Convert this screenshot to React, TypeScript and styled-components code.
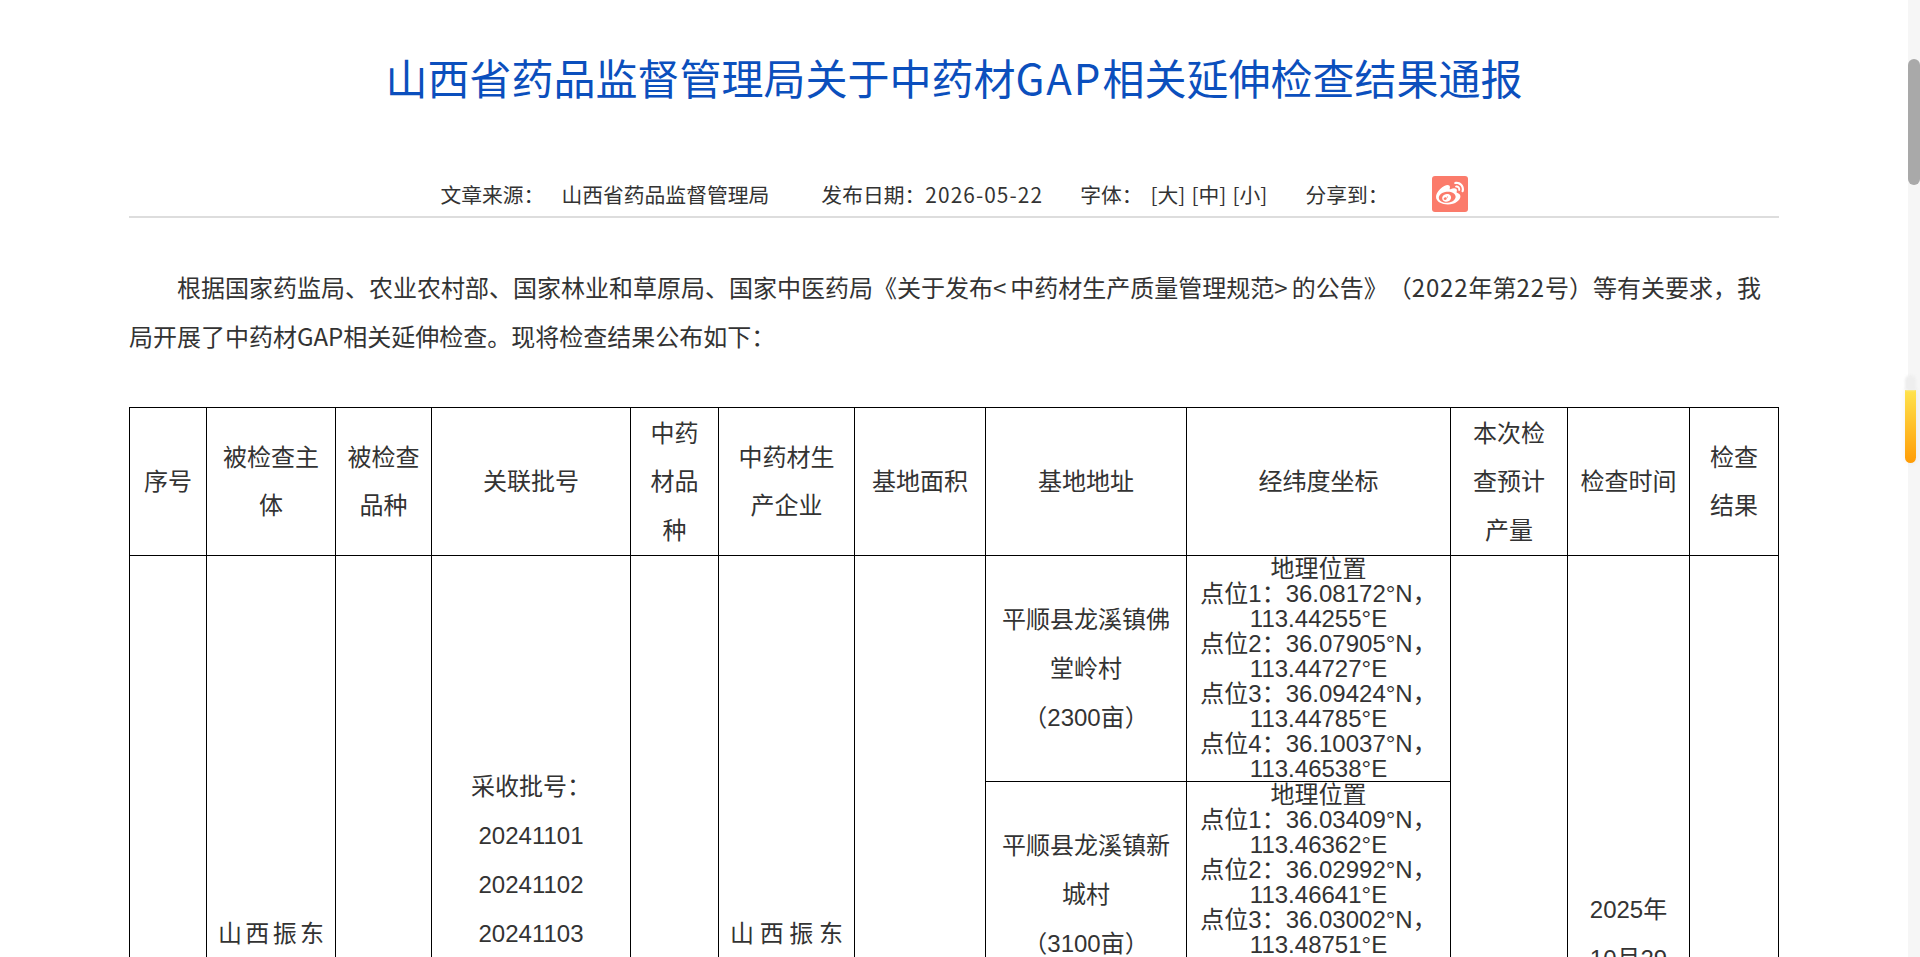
import * as React from 'react'
import styled, { createGlobalStyle } from 'styled-components'
import { FaWeibo } from 'react-icons/fa'

const GlobalStyle = createGlobalStyle`
  html, body {
    margin: 0;
    padding: 0;
    height: 100%;
    overflow: hidden;
    background: #fff;
  }
`

const Page = styled.div`
  position: relative;
  display: flex;
  width: 1920px;
  height: 957px;
  overflow: hidden;
  font-family: "Noto Sans CJK SC", "Liberation Sans", sans-serif;
  color: #333;
`

const Main = styled.main`
  flex: 1;
  min-width: 0;
  height: 957px;
  overflow: hidden;
`

const Article = styled.article`
  width: 1650px;
  margin: 0 auto;
`

const Title = styled.h1`
  margin: 0;
  padding-top: 47px;
  height: 129px;
  font-size: 42px;
  font-weight: 400;
  line-height: 60px;
  text-align: center;
  color: #0b4fbd;
`

const TitleLatin = styled.span`
  letter-spacing: 2px;
`

const Meta = styled.div`
  display: flex;
  justify-content: center;
  align-items: center;
  height: 36px;
  padding-bottom: 4px;
  border-bottom: 2px solid #ddd;
  font-size: 20.8px;
  line-height: 36px;
  white-space: nowrap;
`

const MetaItem = styled.span<{ $gap?: number }>`
  margin-left: ${(p) => p.$gap ?? 0}px;
`

const MetaDate = styled.span`
  letter-spacing: 1.1px;
`

const SizeLinks = styled(MetaItem)`
  word-spacing: 1.5px;
`

const ShareIcon = styled.a`
  display: flex;
  align-items: center;
  justify-content: center;
  width: 36px;
  height: 36px;
  margin-left: 43px;
  border-radius: 3px;
  background: #fb7b6b;
  color: #fff;
`

const Intro = styled.p`
  margin: 44px 0 47px;
  font-size: 24px;
  line-height: 49px;
  text-indent: 48px;
  text-spacing-trim: space-all;
`

const Spaced = styled.span<{ $space: number }>`
  letter-spacing: ${(p) => p.$space}px;
`

const Table = styled.table`
  width: 1649px;
  table-layout: fixed;
  border-collapse: collapse;
  font-family: "Liberation Sans", "Noto Sans CJK SC", sans-serif;
  font-size: 24px;
  line-height: 49px;
`

const HeadCell = styled.th`
  padding: 0 11px 2px;
  border: 1px solid #000;
  font-weight: 400;
  line-height: 48.3px;
  text-align: center;
  vertical-align: middle;
  font-family: "Noto Sans CJK SC", "Liberation Sans", sans-serif;
`

const Cell = styled.td<{ $justify?: boolean }>`
  padding: 0 11px;
  border: 1px solid #000;
  text-align: ${(p) => (p.$justify ? 'justify' : 'center')};
  vertical-align: middle;
`

const CoordCell = styled.td`
  padding: 0 11px;
  border: 1px solid #000;
  line-height: 25px;
  text-align: center;
  vertical-align: top;
`

const DataRow = styled.tr`
  height: 226px;
`

const HeaderRow = styled.tr`
  height: 147px;
`

const ScrollTrack = styled.div`
  flex: none;
  width: 12px;
  height: 957px;
  background: #f6f6f6;
`

const ScrollThumb = styled.div`
  width: 12px;
  height: 126px;
  margin-top: 59px;
  border-radius: 6px;
  background: #a9a9a9;
`

const SideTab = styled.div`
  position: absolute;
  top: 390px;
  right: 4px;
  width: 11px;
  height: 73px;
  border-radius: 0 0 6px 6px;
  background: linear-gradient(#ffe34d, #ff9c05);
  box-shadow: 0 0 6px rgba(0, 0, 0, 0.06);

  &::before {
    content: '';
    position: absolute;
    top: -15px;
    left: 0;
    width: 11px;
    height: 15px;
    border-radius: 6px 6px 0 0;
    background: #eee;
    filter: blur(1px);
  }
`

const columns = [77, 129, 96, 199, 88, 136, 131, 201, 264, 117, 122, 89]

const headers = [
  '序号',
  '被检查主体',
  '被检查品种',
  '关联批号',
  '中药材品种',
  '中药材生产企业',
  '基地面积',
  '基地地址',
  '经纬度坐标',
  '本次检查预计产量',
  '检查时间',
  '检查结果',
]

const batches = [
  '20241101',
  '20241102',
  '20241103',
  '20241104',
  '20241105',
  '20241106',
  '20241107',
  '20241108',
  '20241109',
]

const company = '山西振东道地药材开发有限公司'

const sites = [
  {
    address: ['平顺县龙溪镇佛堂岭村', '（2300亩）'],
    points: [
      ['36.08172', '113.44255'],
      ['36.07905', '113.44727'],
      ['36.09424', '113.44785'],
      ['36.10037', '113.46538'],
    ],
  },
  {
    address: ['平顺县龙溪镇新城村', '（3100亩）'],
    points: [
      ['36.03409', '113.46362'],
      ['36.02992', '113.46641'],
      ['36.03002', '113.48751'],
    ],
  },
]

const Coordinates = ({ points }: { points: string[][] }) => (
  <CoordCell>
    <div>地理位置</div>
    {points.map(([lat, lng], i) => (
      <div key={lat}>
        点位{i + 1}：{lat}°N，{lng}°E
      </div>
    ))}
  </CoordCell>
)

export default function App() {
  return (
    <Page>
      <GlobalStyle />
      <Main>
        <Article>
          <Title>
            山西省药品监督管理局关于中药材<TitleLatin>GAP</TitleLatin>相关延伸检查结果通报
          </Title>
          <Meta>
            <MetaItem>文章来源：</MetaItem>
            <MetaItem $gap={17}>山西省药品监督管理局</MetaItem>
            <MetaItem $gap={52}>
              发布日期：<MetaDate>2026-05-22</MetaDate>
            </MetaItem>
            <MetaItem $gap={37}>字体：</MetaItem>
            <SizeLinks $gap={8}>[大] [中] [小]</SizeLinks>
            <MetaItem $gap={38}>分享到：</MetaItem>
            <ShareIcon>
              <FaWeibo size={28} />
            </ShareIcon>
          </Meta>
          <Intro>
            根据国家药监局、农业农村部、国家林业和草原局、国家中医药局《关于发布
            <Spaced $space={4}>&lt;</Spaced>中药材生产质量管理规范<Spaced $space={4}>&gt;</Spaced>
            的公告》（<Spaced $space={0.9}>2022</Spaced>年第<Spaced $space={0.9}>22</Spaced>
            号）等有关要求，我
            <br />
            局开展了中药材GAP相关延伸检查。现将检查结果公布如下：
          </Intro>
          <Table>
            <colgroup>
              {columns.map((w, i) => (
                <col key={i} width={w} />
              ))}
            </colgroup>
            <thead>
              <HeaderRow>
                {headers.map((h) => (
                  <HeadCell key={h}>{h}</HeadCell>
                ))}
              </HeaderRow>
            </thead>
            <tbody>
              <DataRow>
                <Cell rowSpan={4}>1</Cell>
                <Cell rowSpan={4} $justify>
                  {company}
                </Cell>
                <Cell rowSpan={4} />
                <Cell rowSpan={4}>
                  采收批号：
                  {batches.map((b) => (
                    <div key={b}>{b}</div>
                  ))}
                </Cell>
                <Cell rowSpan={4} />
                <Cell rowSpan={4} $justify>
                  {company}
                </Cell>
                <Cell rowSpan={4} />
                <Cell>
                  {sites[0].address.map((line) => (
                    <div key={line}>{line}</div>
                  ))}
                </Cell>
                <Coordinates points={sites[0].points} />
                <Cell rowSpan={4} />
                <Cell rowSpan={4}>
                  <div>2025年</div>
                  <div>10月29</div>
                  <div>日-10</div>
                  <div>月31</div>
                  <div>日</div>
                </Cell>
                <Cell rowSpan={4} />
              </DataRow>
              <DataRow>
                <Cell>
                  {sites[1].address.map((line) => (
                    <div key={line}>{line}</div>
                  ))}
                </Cell>
                <Coordinates points={sites[1].points} />
              </DataRow>
              <DataRow>
                <Cell />
                <CoordCell />
              </DataRow>
              <DataRow>
                <Cell />
                <CoordCell />
              </DataRow>
            </tbody>
          </Table>
        </Article>
      </Main>
      <ScrollTrack>
        <ScrollThumb />
      </ScrollTrack>
      <SideTab />
    </Page>
  )
}
